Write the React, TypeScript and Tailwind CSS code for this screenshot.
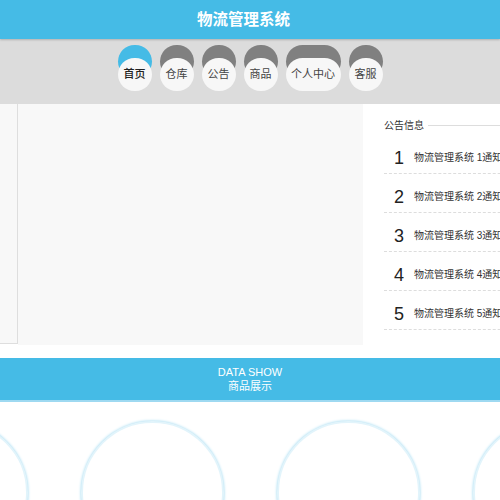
const navItems = ["首页", "仓库", "公告", "商品", "个人中心", "客服"];
const notices = [1, 2, 3, 4, 5];
const products = [0, 1, 2, 3];

function NavButton({ label, active }: { label: string; active: boolean }) {
  const wide = label.length > 2;
  return (
    <button
      className={`h-[33px] ${wide ? "w-[55px]" : "w-[34px]"} rounded-full bg-[#f7f7f7] text-[11px] ${
        active
          ? "text-[#222] font-medium shadow-[0_-13px_0_#45bbe6]"
          : "text-[#444] shadow-[0_-13px_0_#808080]"
      }`}
    >
      {label}
    </button>
  );
}

export default function App() {
  return (
    <div className="w-[500px] h-[500px] overflow-hidden bg-white font-['Liberation_Sans','Noto_Sans_CJK_SC',sans-serif]">
      <header className="h-[39px] bg-[#45bbe6] flex items-center justify-center pr-[13px] text-white text-[15.5px] font-semibold shadow-[0_1px_2px_rgba(0,0,0,0.2)] relative z-10">
        物流管理系统
      </header>

      <nav className="h-[65px] bg-[#dcdcdc] flex justify-center gap-2 pt-[19px]">
        {navItems.map((item, i) => (
          <NavButton key={item} label={item} active={i === 0} />
        ))}
      </nav>

      <section className="flex h-[241px] w-[560px]">
        <div className="w-[18px] h-[240px] bg-[#f8f8f8] border-r border-b border-[#dedede]" />
        <div className="w-[345px] bg-[#f8f8f8]" />
        <div className="flex-1 pl-[21px] pt-[14px]">
          <div className="flex items-center gap-1 text-[10px] text-[#333]">
            <span>公告信息</span>
            <span className="flex-1 border-t border-[#ddd]" />
          </div>
          <ul className="mt-[2px]">
            {notices.map((n) => (
              <li
                key={n}
                className="h-[39px] pt-[7px] flex items-center border-b border-dashed border-[#ddd] text-[#222]"
              >
                <span className="w-[20px] ml-[10px] text-[18px] font-light leading-none">{n}</span>
                <span className="text-[10px] text-[#333] whitespace-nowrap">
                  物流管理系统 {n}通知
                </span>
              </li>
            ))}
          </ul>
        </div>
      </section>

      <div className="h-[13px]" />

      <div className="h-[44px] bg-[#45bbe6] border-b-2 border-[#9ed9f1] flex flex-col items-center justify-center text-white text-[11px] leading-[14px]">
        <span>DATA SHOW</span>
        <span>商品展示</span>
      </div>

      <div className="flex gap-[53px] ml-[-115px] mt-[19px]">
        {products.map((p) => (
          <div
            key={p}
            className="w-[143px] h-[143px] shrink-0 rounded-full bg-white border-2 border-[#e2f4fb] shadow-[0_0_3px_#8fd3ee]"
          />
        ))}
      </div>
    </div>
  );
}
